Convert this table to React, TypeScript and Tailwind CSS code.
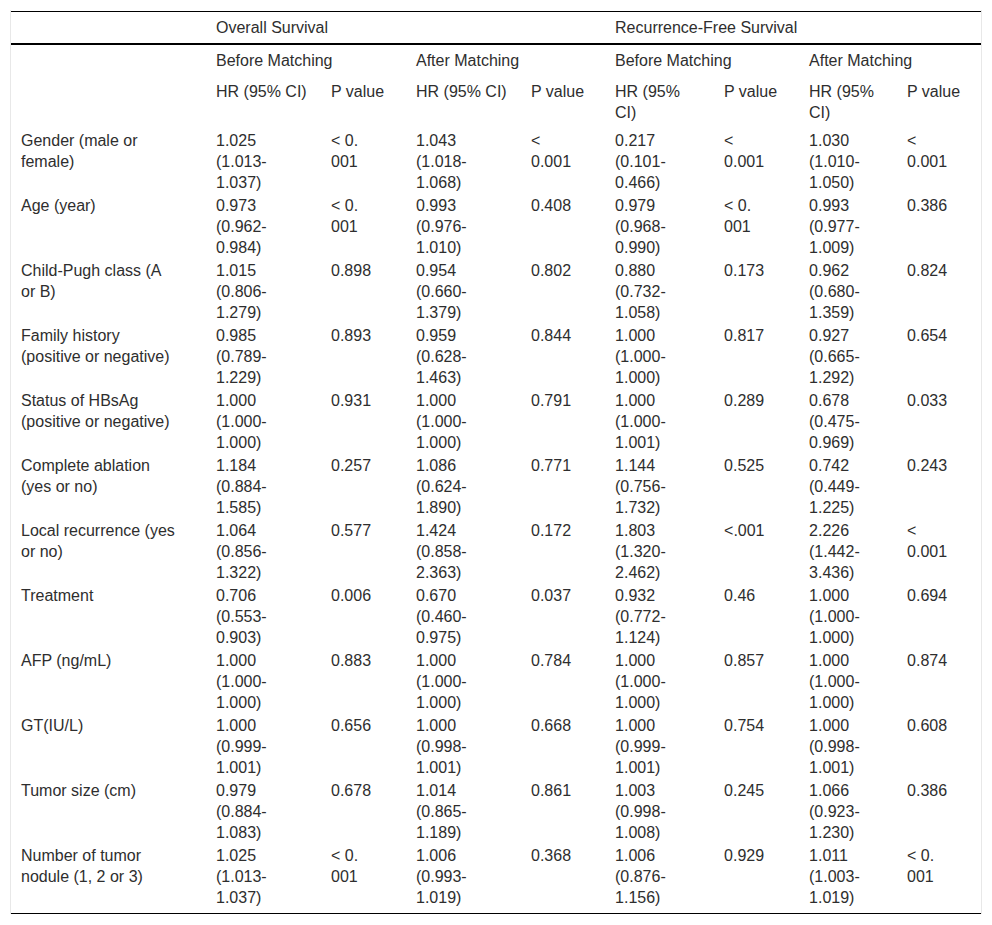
import React from 'react'

type Pair = [string, string]

interface Row {
    label: string
    cells: Pair[]
}

// HR value with CI, wrapped the way the source table wraps it
const hr = (v: string, lo: string, hi: string) => `${v}\n(${lo}-\n${hi})`

const rows: Row[] = [
    {
        label: 'Gender (male or\nfemale)',
        cells: [
            [hr('1.025', '1.013', '1.037'), '< 0.\n001'],
            [hr('1.043', '1.018', '1.068'), '<\n0.001'],
            [hr('0.217', '0.101', '0.466'), '<\n0.001'],
            [hr('1.030', '1.010', '1.050'), '<\n0.001'],
        ],
    },
    {
        label: 'Age (year)',
        cells: [
            [hr('0.973', '0.962', '0.984'), '< 0.\n001'],
            [hr('0.993', '0.976', '1.010'), '0.408'],
            [hr('0.979', '0.968', '0.990'), '< 0.\n001'],
            [hr('0.993', '0.977', '1.009'), '0.386'],
        ],
    },
    {
        label: 'Child-Pugh class (A\nor B)',
        cells: [
            [hr('1.015', '0.806', '1.279'), '0.898'],
            [hr('0.954', '0.660', '1.379'), '0.802'],
            [hr('0.880', '0.732', '1.058'), '0.173'],
            [hr('0.962', '0.680', '1.359'), '0.824'],
        ],
    },
    {
        label: 'Family history\n(positive or negative)',
        cells: [
            [hr('0.985', '0.789', '1.229'), '0.893'],
            [hr('0.959', '0.628', '1.463'), '0.844'],
            [hr('1.000', '1.000', '1.000'), '0.817'],
            [hr('0.927', '0.665', '1.292'), '0.654'],
        ],
    },
    {
        label: 'Status of HBsAg\n(positive or negative)',
        cells: [
            [hr('1.000', '1.000', '1.000'), '0.931'],
            [hr('1.000', '1.000', '1.000'), '0.791'],
            [hr('1.000', '1.000', '1.001'), '0.289'],
            [hr('0.678', '0.475', '0.969'), '0.033'],
        ],
    },
    {
        label: 'Complete ablation\n(yes or no)',
        cells: [
            [hr('1.184', '0.884', '1.585'), '0.257'],
            [hr('1.086', '0.624', '1.890'), '0.771'],
            [hr('1.144', '0.756', '1.732'), '0.525'],
            [hr('0.742', '0.449', '1.225'), '0.243'],
        ],
    },
    {
        label: 'Local recurrence (yes\nor no)',
        cells: [
            [hr('1.064', '0.856', '1.322'), '0.577'],
            [hr('1.424', '0.858', '2.363'), '0.172'],
            [hr('1.803', '1.320', '2.462'), '<.001'],
            [hr('2.226', '1.442', '3.436'), '<\n0.001'],
        ],
    },
    {
        label: 'Treatment',
        cells: [
            [hr('0.706', '0.553', '0.903'), '0.006'],
            [hr('0.670', '0.460', '0.975'), '0.037'],
            [hr('0.932', '0.772', '1.124'), '0.46'],
            [hr('1.000', '1.000', '1.000'), '0.694'],
        ],
    },
    {
        label: 'AFP (ng/mL)',
        cells: [
            [hr('1.000', '1.000', '1.000'), '0.883'],
            [hr('1.000', '1.000', '1.000'), '0.784'],
            [hr('1.000', '1.000', '1.000'), '0.857'],
            [hr('1.000', '1.000', '1.000'), '0.874'],
        ],
    },
    {
        label: 'GT(IU/L)',
        cells: [
            [hr('1.000', '0.999', '1.001'), '0.656'],
            [hr('1.000', '0.998', '1.001'), '0.668'],
            [hr('1.000', '0.999', '1.001'), '0.754'],
            [hr('1.000', '0.998', '1.001'), '0.608'],
        ],
    },
    {
        label: 'Tumor size (cm)',
        cells: [
            [hr('0.979', '0.884', '1.083'), '0.678'],
            [hr('1.014', '0.865', '1.189'), '0.861'],
            [hr('1.003', '0.998', '1.008'), '0.245'],
            [hr('1.066', '0.923', '1.230'), '0.386'],
        ],
    },
    {
        label: 'Number of tumor\nnodule (1, 2 or 3)',
        cells: [
            [hr('1.025', '1.013', '1.037'), '< 0.\n001'],
            [hr('1.006', '0.993', '1.019'), '0.368'],
            [hr('1.006', '0.876', '1.156'), '0.929'],
            [hr('1.011', '1.003', '1.019'), '< 0.\n001'],
        ],
    },
]

const head = 'px-[10px] py-[5px] text-left font-normal align-top whitespace-pre-line'
const cell = 'px-[10px] pt-[2px] align-top whitespace-pre-line'

export default function App() {
    return (
        <div className="bg-white min-h-[925px] pt-[10px] pl-[10px] text-[#2e2e2e] text-[16px] leading-[21px] font-['Liberation_Sans',Arial,sans-serif]">
            <div className="w-[972px] border-x border-[#e8e8e8] pt-[1px]">
                <table className="w-[970px] table-fixed border-collapse">
                    <colgroup>
                        <col className="w-[195px]" />
                        <col className="w-[115px]" />
                        <col className="w-[85px]" />
                        <col className="w-[115px]" />
                        <col className="w-[84px]" />
                        <col className="w-[109px]" />
                        <col className="w-[85px]" />
                        <col className="w-[98px]" />
                        <col className="w-[84px]" />
                    </colgroup>
                    <thead>
                        <tr className="border-t border-black border-b-2">
                            <th className={head}></th>
                            <th className={head} colSpan={4}>Overall Survival</th>
                            <th className={head} colSpan={4}>Recurrence-Free Survival</th>
                        </tr>
                        <tr>
                            <th className={head}></th>
                            <th className={head} colSpan={2}>Before Matching</th>
                            <th className={head} colSpan={2}>After Matching</th>
                            <th className={head} colSpan={2}>Before Matching</th>
                            <th className={head} colSpan={2}>After Matching</th>
                        </tr>
                        <tr>
                            <th className={head}></th>
                            <th className={head}>HR (95% CI)</th>
                            <th className={head}>P value</th>
                            <th className={head}>HR (95% CI)</th>
                            <th className={head}>P value</th>
                            <th className={head}>{'HR (95%\nCI)'}</th>
                            <th className={head}>P value</th>
                            <th className={head}>{'HR (95%\nCI)'}</th>
                            <th className={head}>P value</th>
                        </tr>
                    </thead>
                    <tbody>
                        {rows.map((row, i) => {
                            const last = i === rows.length - 1
                            return (
                                <tr key={i} className={last ? 'border-b border-black' : ''}>
                                    <td className={`${cell} ${last ? 'pb-[5px]' : ''}`}>{row.label}</td>
                                    {row.cells.map(([h, p], j) => (
                                        <React.Fragment key={j}>
                                            <td className={`${cell} ${last ? 'pb-[5px]' : ''}`}>{h}</td>
                                            <td className={`${cell} ${last ? 'pb-[5px]' : ''}`}>{p}</td>
                                        </React.Fragment>
                                    ))}
                                </tr>
                            )
                        })}
                    </tbody>
                </table>
            </div>
        </div>
    )
}
